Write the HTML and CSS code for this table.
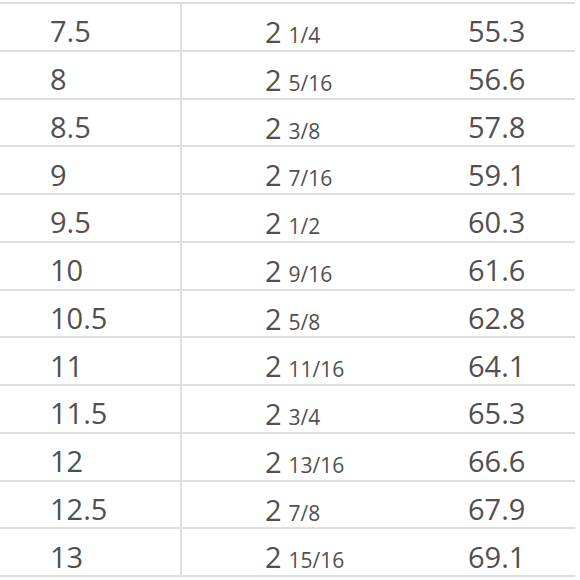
FILE: index.html
```html
<!DOCTYPE html>
<html>
<head>
<meta charset="utf-8">
<link rel="stylesheet" href="styles.css">
</head>
<body>
<div class="table">
  <div class="row"><div class="c1">7.5</div><div class="c2">2<span class="fr">1/4</span></div><div class="c3">55.3</div></div>
  <div class="row"><div class="c1">8</div><div class="c2">2<span class="fr">5/16</span></div><div class="c3">56.6</div></div>
  <div class="row"><div class="c1">8.5</div><div class="c2">2<span class="fr">3/8</span></div><div class="c3">57.8</div></div>
  <div class="row"><div class="c1">9</div><div class="c2">2<span class="fr">7/16</span></div><div class="c3">59.1</div></div>
  <div class="row"><div class="c1">9.5</div><div class="c2">2<span class="fr">1/2</span></div><div class="c3">60.3</div></div>
  <div class="row"><div class="c1">10</div><div class="c2">2<span class="fr">9/16</span></div><div class="c3">61.6</div></div>
  <div class="row"><div class="c1">10.5</div><div class="c2">2<span class="fr">5/8</span></div><div class="c3">62.8</div></div>
  <div class="row"><div class="c1">11</div><div class="c2">2<span class="fr">11/16</span></div><div class="c3">64.1</div></div>
  <div class="row"><div class="c1">11.5</div><div class="c2">2<span class="fr">3/4</span></div><div class="c3">65.3</div></div>
  <div class="row"><div class="c1">12</div><div class="c2">2<span class="fr">13/16</span></div><div class="c3">66.6</div></div>
  <div class="row"><div class="c1">12.5</div><div class="c2">2<span class="fr">7/8</span></div><div class="c3">67.9</div></div>
  <div class="row"><div class="c1">13</div><div class="c2">2<span class="fr">15/16</span></div><div class="c3">69.1</div></div>
</div>
</body>
</html>
```

FILE: styles.css
```css
html, body {
  margin: 0;
  padding: 0;
  background: #ffffff;
}

body {
  font-family: "Open Sans", "DejaVu Sans", sans-serif;
  color: #505050;
  width: 580px;
  height: 580px;
  overflow: hidden;
}

.table {
  width: 575px;
  padding-top: 2px;
}

.row {
  display: grid;
  grid-template-columns: 180px 240px 1fr;
  height: 45.75px;
  border-top: 2px solid #dedede;
}

.row:last-child {
  border-bottom: 2px solid #dedede;
}

.c1, .c2, .c3 {
  display: flex;
  align-items: center;
  padding-top: 8px;
  font-size: 29px;
  line-height: 1;
}

.c1 {
  padding-left: 50px;
}

.c2 {
  border-left: 2px solid #dedede;
  padding-left: 83px;
  align-items: baseline;
  padding-top: 13px;
}

.c3 {
  padding-left: 48px;
}

.fr {
  font-size: 21px;
  margin-left: 7px;
}
```
